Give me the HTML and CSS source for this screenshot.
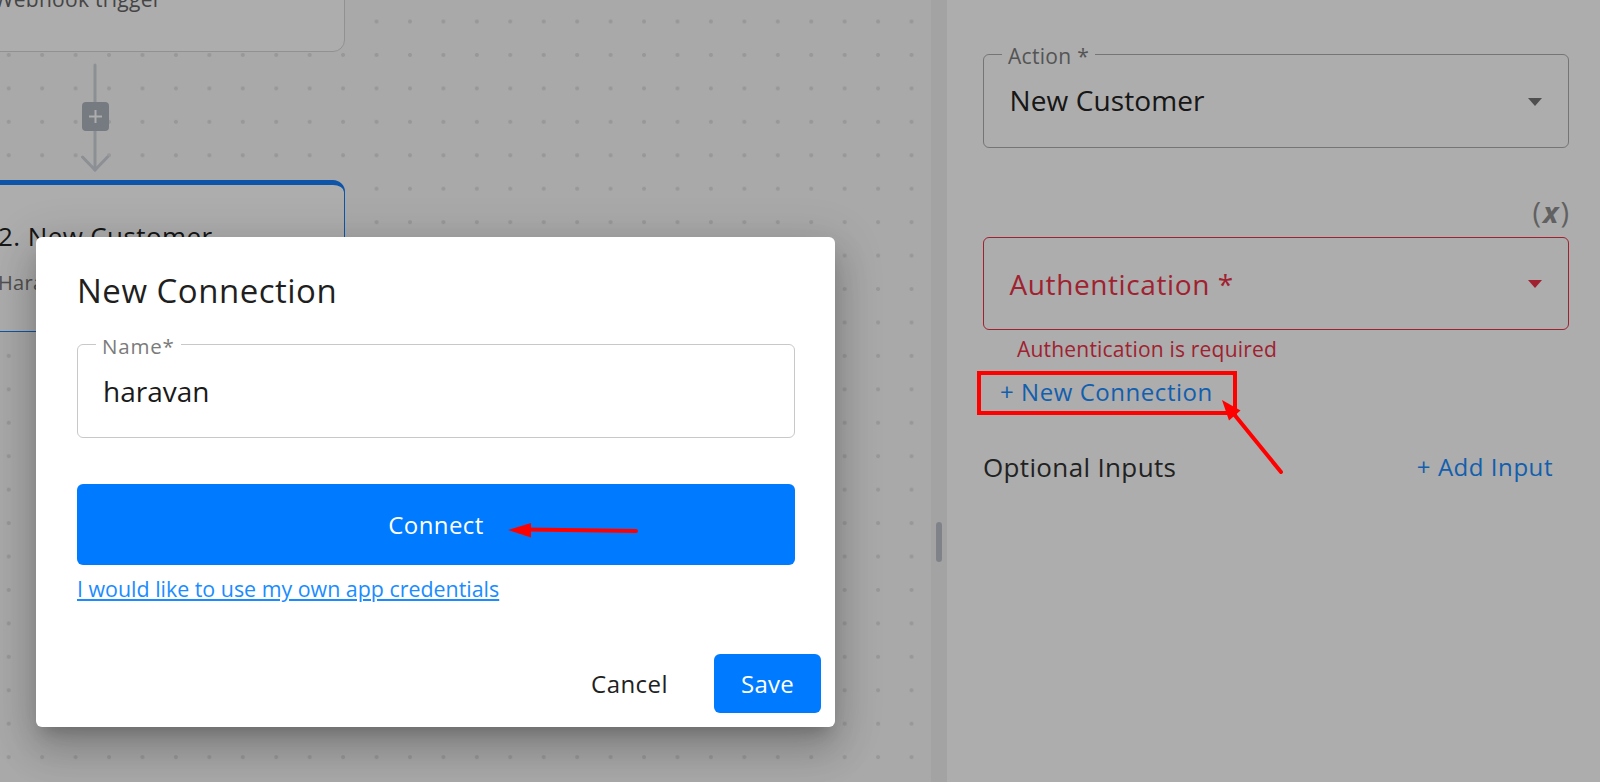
FILE: index.html
```html
<!DOCTYPE html>
<html lang="en">
<head>
<meta charset="utf-8">
<title>New Connection</title>
<link rel="stylesheet" href="styles.css">
</head>
<body>
<div class="app">
  <main class="canvas">
    <div class="node node-trigger">
      <div class="node-sub node-sub-top">Webhook trigger</div>
    </div>
    <svg class="connector" width="40" height="120" viewBox="0 0 40 120" aria-hidden="true">
      <line x1="20" y1="5" x2="20" y2="110" class="conn-line"/>
      <polyline points="7.5,97 20,110 32.5,97" class="conn-line" fill="none"/>
      <rect x="7" y="42" width="27" height="29" rx="4" class="conn-plus-box"/>
      <line x1="14" y1="56.5" x2="27" y2="56.5" class="conn-plus"/>
      <line x1="20.5" y1="50" x2="20.5" y2="63" class="conn-plus"/>
    </svg>
    <div class="node node-action">
      <div class="node-title">2. New Customer</div>
      <div class="node-sub">Haravan</div>
    </div>
  </main>

  <div class="gutter"><span class="gutter-handle"></span></div>

  <aside class="panel">
    <fieldset class="field">
      <legend>Action *</legend>
      <div class="select-row">
        <span class="select-value">New Customer</span>
        <span class="caret"></span>
      </div>
    </fieldset>

    <div class="var-row"><span class="var-btn">(<i>x</i>)</span></div>

    <div class="field-box field-error">
      <div class="select-row">
        <span class="select-value">Authentication *</span>
        <span class="caret"></span>
      </div>
    </div>
    <div class="error-text">Authentication is required</div>

    <a class="link new-conn">+ New Connection</a>

    <div class="optional-row">
      <span class="optional-title">Optional Inputs</span>
      <a class="link add-input">+ Add Input</a>
    </div>
  </aside>
</div>

<div class="backdrop"></div>

<div class="dialog" role="dialog" aria-label="New Connection">
  <div class="dialog-body">
    <h2 class="dialog-title">New Connection</h2>
    <fieldset class="name-field">
      <legend>Name*</legend>
      <input class="name-input" type="text" value="haravan">
    </fieldset>
    <button class="connect-btn" type="button">Connect</button>
    <p class="creds"><a class="creds-link">I would like to use my own app credentials</a></p>
  </div>
  <div class="dialog-actions">
    <button class="btn-text" type="button">Cancel</button>
    <button class="btn-primary" type="button">Save</button>
  </div>
</div>

<svg class="annotations" width="1600" height="782" viewBox="0 0 1600 782" aria-hidden="true">
  <line x1="528" y1="529.6" x2="636" y2="531" class="anno-stroke"/>
  <polygon points="508,530 531,523 531,537.5" class="anno-fill"/>
  <rect x="979" y="373" width="256" height="40" class="anno-rect"/>
  <line x1="1281" y1="472" x2="1233" y2="413" class="anno-stroke"/>
  <polygon points="1222,400 1240.5,410.5 1229,420.5" class="anno-fill"/>
</svg>
</body>
</html>
```

FILE: styles.css
```css
* { box-sizing: border-box; }

html, body {
  margin: 0;
  padding: 0;
  width: 1600px;
  height: 782px;
  overflow: hidden;
}

body {
  position: relative;
  font-family: "Open Sans", "Noto Sans", "Liberation Sans", sans-serif;
  color: #212121;
  background: #ffffff;
}

.app {
  display: flex;
  width: 1600px;
  height: 782px;
}

/* ---------- canvas ---------- */
.canvas {
  position: relative;
  flex: none;
  width: 931px;
  height: 100%;
  overflow: hidden;
  background-color: #f9f9f9;
  background-image: radial-gradient(circle, #e1e1e1 1.7px, rgba(225,225,225,0) 2.3px);
  background-size: 33.45px 33.45px;
  background-position: -8px 4.8px;
}

.node {
  position: absolute;
  left: -60px;
  width: 405px;
  background: #ffffff;
  padding-left: 57px;
}

.node-trigger {
  top: -60px;
  height: 112px;
  border: 1px solid #d6d6d6;
  border-radius: 12px;
  padding-top: 44px;
}

.node-action {
  top: 180px;
  height: 152px;
  border: 1px solid #157efb;
  border-top: 5px solid #157efb;
  border-radius: 12px;
  padding-top: 35px;
}

.node-title {
  font-size: 26px;
  line-height: 32px;
  letter-spacing: 0.4px;
  color: #222222;
  white-space: nowrap;
}

.node-sub {
  margin-top: 18px;
  font-size: 20px;
  line-height: 26px;
  letter-spacing: 0.3px;
  color: #777777;
  white-space: nowrap;
}

.node-sub-top {
  margin-top: 0;
  margin-left: -4px;
  font-size: 21px;
  line-height: 28px;
  color: #666666;
}

.connector {
  position: absolute;
  left: 75px;
  top: 60px;
}

.conn-line {
  stroke: #ced4da;
  stroke-width: 3;
  stroke-linecap: round;
  stroke-linejoin: round;
}

.conn-plus-box { fill: #adb5bd; }

.conn-plus {
  stroke: #ffffff;
  stroke-width: 2;
}

/* ---------- gutter ---------- */
.gutter {
  flex: none;
  width: 16px;
  height: 100%;
  background: #f1f1f1;
  display: flex;
  justify-content: center;
  padding-top: 522px;
}

.gutter-handle {
  width: 6px;
  height: 40px;
  border-radius: 3px;
  background: #bcc2cb;
}

/* ---------- side panel ---------- */
.panel {
  flex: 1;
  background: #ffffff;
  padding: 40px 31px 0 36px;
  display: flex;
  flex-direction: column;
  align-items: stretch;
}

.field {
  margin: 0;
  min-width: 0;
  padding: 14px 0 29px;
  border: 1px solid rgba(0, 0, 0, 0.32);
  border-radius: 6px;
}

.field legend {
  margin-left: 18px;
  padding: 4px 6px 0;
  font-size: 21px;
  line-height: 24px;
  letter-spacing: 0.3px;
  color: #7d7d7d;
}

.select-row {
  display: flex;
  align-items: center;
  justify-content: space-between;
  height: 36px;
  padding: 0 26px 0 25.5px;
}

.select-value {
  font-size: 28px;
  line-height: 36px;
  letter-spacing: 0.1px;
  color: #222222;
  white-space: nowrap;
}

.caret {
  width: 0;
  height: 0;
  margin-top: 4px;
  border-left: 7px solid transparent;
  border-right: 7px solid transparent;
  border-top: 8px solid #757575;
}

.var-row {
  display: flex;
  justify-content: flex-end;
  margin-top: 48px;
  height: 32px;
}

.var-btn {
  font-size: 29px;
  line-height: 32px;
  color: #8f8f8f;
}

.var-btn i {
  font-weight: 700;
  font-style: italic;
  padding: 0 2px;
}

.field-box {
  margin-top: 9px;
  padding: 28px 0 27px;
  border-radius: 6px;
}

.field-error {
  border: 1px solid #ec3148;
}

.field-error .select-value {
  color: #ec3148;
  letter-spacing: 0.6px;
}

.field-error .caret {
  margin-top: 0;
  border-top-color: #ec3148;
}

.error-text {
  margin-top: 6px;
  padding-left: 34px;
  font-size: 21px;
  line-height: 26px;
  letter-spacing: 0.2px;
  color: #ec3148;
}

.link {
  color: #1a8cff;
  font-size: 24px;
  line-height: 30px;
  letter-spacing: 0.55px;
  text-decoration: none;
  white-space: nowrap;
}

.new-conn {
  align-self: flex-start;
  margin-top: 15px;
  padding-left: 17px;
}

.optional-row {
  display: flex;
  align-items: center;
  justify-content: space-between;
  margin-top: 43px;
  padding-right: 16px;
  height: 34px;
}

.optional-title {
  font-size: 26px;
  line-height: 34px;
  letter-spacing: 0.35px;
  color: #333333;
}

/* ---------- modal ---------- */
.backdrop {
  position: absolute;
  left: 0;
  top: 0;
  width: 1600px;
  height: 782px;
  background: rgba(0, 0, 0, 0.32);
}

.dialog {
  position: absolute;
  left: 36px;
  top: 237px;
  width: 799px;
  height: 490px;
  background: #ffffff;
  border-radius: 6px;
  box-shadow: 0 11px 15px -7px rgba(0,0,0,.2), 0 24px 38px 3px rgba(0,0,0,.14), 0 9px 46px 8px rgba(0,0,0,.12);
  display: flex;
  flex-direction: column;
}

.dialog-body {
  padding: 34px 40px 0 41px;
}

.dialog-title {
  margin: 0;
  font-size: 33px;
  line-height: 40px;
  font-weight: 400;
  letter-spacing: 0.5px;
  color: #1f1f1f;
}

.name-field {
  margin: 19px 0 0;
  min-width: 0;
  padding: 15px 0 28px;
  border: 1px solid #c8c8c8;
  border-radius: 6px;
}

.name-field legend {
  margin-left: 18px;
  padding: 4px 6px 0;
  font-size: 20.5px;
  line-height: 24px;
  letter-spacing: 0.8px;
  color: #7b7b7b;
}

.name-input {
  display: block;
  width: 100%;
  height: 36px;
  margin: 0;
  padding: 0 22px 0 25px;
  border: 0;
  outline: 0;
  background: transparent;
  font-family: "Open Sans", "Noto Sans", "Liberation Sans", sans-serif;
  font-size: 28px;
  line-height: 36px;
  color: #1a1a1a;
}

.connect-btn {
  display: flex;
  align-items: center;
  justify-content: center;
  width: 100%;
  height: 81px;
  margin-top: 46px;
  padding: 0;
  border: 0;
  border-radius: 6px;
  background: #007bff;
  color: #ffffff;
  font-family: "Open Sans", "Noto Sans", "Liberation Sans", sans-serif;
  font-size: 24px;
  letter-spacing: 0.4px;
}

.creds {
  margin: 11px 0 0;
  font-size: 21.4px;
  line-height: 26px;
}

.creds-link {
  color: #1a8cff;
  text-decoration: underline;
}

.dialog-actions {
  margin-top: auto;
  display: flex;
  justify-content: flex-end;
  align-items: center;
  gap: 30px;
  padding: 0 14px 14px;
}

.btn-text,
.btn-primary {
  height: 59px;
  border: 0;
  font-family: "Open Sans", "Noto Sans", "Liberation Sans", sans-serif;
  font-size: 24px;
  letter-spacing: 0.2px;
}

.btn-text {
  padding: 0 16px;
  background: transparent;
  color: #212121;
  letter-spacing: 0.45px;
}

.btn-primary {
  width: 107px;
  padding: 0;
  border-radius: 6px;
  background: #007bff;
  color: #ffffff;
  font-weight: 500;
}

/* ---------- annotations ---------- */
.annotations {
  position: absolute;
  left: 0;
  top: 0;
  pointer-events: none;
}

.anno-stroke {
  stroke: #ff0000;
  stroke-width: 4;
  stroke-linecap: round;
}

.anno-fill { fill: #ff0000; }

.anno-rect {
  fill: none;
  stroke: #ff0000;
  stroke-width: 4;
}
```
